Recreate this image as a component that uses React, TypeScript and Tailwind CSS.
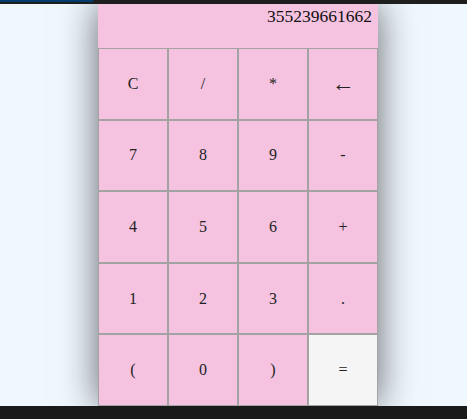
const keys = ['C', '/', '*', '←', '7', '8', '9', '-', '4', '5', '6', '+', '1', '2', '3', '.', '(', '0', ')', '='];

export default function App() {
  return (
    <div className="w-[467px] h-[419px] flex flex-col bg-[#f0f8ff] overflow-hidden" style={{ fontFamily: '"Liberation Serif", serif' }}>
      {/* top strip */}
      <div className="h-[4px] bg-[#1e1e1e] shrink-0 relative z-10">
        <div className="w-[93px] h-[2px] bg-[#003b6f]" />
      </div>

      <div className="flex-1 flex min-h-0">
        <div className="ml-[98px] w-[280px] h-full flex flex-col bg-[#f5c3e0] shadow-[0_0_36px_rgba(0,0,0,0.6)]">
          <div className="h-[44px] shrink-0 text-right pr-[6px] pt-[2px] text-[17.5px] leading-[20px] text-[#111]">
            355239661662
          </div>
          <div className="flex-1 grid grid-cols-4 grid-rows-5">
            {keys.map((k) => (
              <button
                key={k}
                className={`border border-[#a3a3a3] flex items-center justify-center text-[#222] ${
                  k === '=' ? 'bg-[#f5f5f5]' : 'bg-[#f5c3e0]'
                } ${k === '←' ? 'text-[23px]' : 'text-[16px]'}`}
              >
                {k}
              </button>
            ))}
          </div>
        </div>
      </div>

      {/* bottom strip */}
      <div className="h-[13px] bg-[#1a1a1a] shrink-0 relative z-10" />
    </div>
  );
}
